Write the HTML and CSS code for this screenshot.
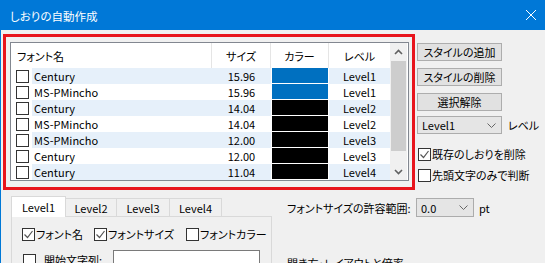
FILE: index.html
```html
<!DOCTYPE html>
<html lang="ja">
<head>
    <meta charset="utf-8">
    <title>しおりの自動作成</title>
    <link rel="stylesheet" href="styles.css">
</head>
<body>
    <div class="window">
        <div class="titlebar">
            <span class="title">しおりの自動作成</span>
            <svg class="close" width="10" height="10" viewBox="0 0 10 10"><path d="M0 0L10 10M10 0L0 10" stroke="#fff" stroke-width="1"/></svg>
        </div>

        <div class="top">
            <div class="redbox">
                <div class="listbox">
                    <div class="table">
                        <div class="head">
                            <div class="hcell name">フォント名</div>
                            <div class="hcell">サイズ</div>
                            <div class="hcell">カラー</div>
                            <div class="hcell last">レベル</div>
                        </div>
                        <div class="row odd">
                            <div class="ck"><span class="cb"></span></div>
                            <div class="c-name">Century</div>
                            <div class="c-mid">15.96</div>
                            <div class="c-color"><div class="swatch blue"></div></div>
                            <div class="c-mid">Level1</div>
                        </div>
                        <div class="row">
                            <div class="ck"><span class="cb"></span></div>
                            <div class="c-name">MS-PMincho</div>
                            <div class="c-mid">15.96</div>
                            <div class="c-color"><div class="swatch blue"></div></div>
                            <div class="c-mid">Level1</div>
                        </div>
                        <div class="row odd">
                            <div class="ck"><span class="cb"></span></div>
                            <div class="c-name">Century</div>
                            <div class="c-mid">14.04</div>
                            <div class="c-color"><div class="swatch"></div></div>
                            <div class="c-mid">Level2</div>
                        </div>
                        <div class="row">
                            <div class="ck"><span class="cb"></span></div>
                            <div class="c-name">MS-PMincho</div>
                            <div class="c-mid">14.04</div>
                            <div class="c-color"><div class="swatch"></div></div>
                            <div class="c-mid">Level2</div>
                        </div>
                        <div class="row odd">
                            <div class="ck"><span class="cb"></span></div>
                            <div class="c-name">MS-PMincho</div>
                            <div class="c-mid">12.00</div>
                            <div class="c-color"><div class="swatch"></div></div>
                            <div class="c-mid">Level3</div>
                        </div>
                        <div class="row">
                            <div class="ck"><span class="cb"></span></div>
                            <div class="c-name">Century</div>
                            <div class="c-mid">12.00</div>
                            <div class="c-color"><div class="swatch"></div></div>
                            <div class="c-mid">Level3</div>
                        </div>
                        <div class="row odd">
                            <div class="ck"><span class="cb"></span></div>
                            <div class="c-name">Century</div>
                            <div class="c-mid">11.04</div>
                            <div class="c-color"><div class="swatch"></div></div>
                            <div class="c-mid">Level4</div>
                        </div>
                    </div>
                    <div class="scrollbar">
                        <div class="arrow"><svg width="9" height="6" viewBox="0 0 9 6"><path d="M1 5L4.5 1.5L8 5" stroke="#606060" stroke-width="1.6" fill="none"/></svg></div>
                        <div class="thumb"></div>
                        <div class="track"></div>
                        <div class="arrow"><svg width="9" height="6" viewBox="0 0 9 6"><path d="M1 1L4.5 4.5L8 1" stroke="#606060" stroke-width="1.6" fill="none"/></svg></div>
                    </div>
                </div>
            </div>

            <div class="side">
                <button class="btn first">スタイルの追加</button>
                <button class="btn">スタイルの削除</button>
                <button class="btn">選択解除</button>
                <div class="select-row">
                    <div class="select level-select">
                        <span>Level1</span>
                        <svg width="9" height="5" viewBox="0 0 9 5"><path d="M0.5 0.5L4.5 4.5L8.5 0.5" stroke="#666" fill="none"/></svg>
                    </div>
                    <span class="after">レベル</span>
                </div>
                <label class="check side-check first-check"><span class="cb"><svg width="11" height="11" viewBox="0 0 11 11"><path d="M1.5 5.5L4.5 8.5L9.5 2" stroke="#555" stroke-width="1.2" fill="none"/></svg></span>既存のしおりを削除</label>
                <label class="check side-check"><span class="cb"></span>先頭文字のみで判断</label>
            </div>
        </div>

        <div class="bottom">
            <div class="tabbox">
                <div class="tabs">
                    <div class="tab active">Level1</div>
                    <div class="tab w2">Level2</div>
                    <div class="tab w3">Level3</div>
                    <div class="tab w4">Level4</div>
                </div>
                <div class="panel">
                    <div class="panel-row">
                        <label class="check c1"><span class="cb"><svg width="11" height="11" viewBox="0 0 11 11"><path d="M1.5 5.5L4.5 8.5L9.5 2" stroke="#555" stroke-width="1.2" fill="none"/></svg></span>フォント名</label>
                        <label class="check c2"><span class="cb"><svg width="11" height="11" viewBox="0 0 11 11"><path d="M1.5 5.5L4.5 8.5L9.5 2" stroke="#555" stroke-width="1.2" fill="none"/></svg></span>フォントサイズ</label>
                        <label class="check"><span class="cb"></span>フォントカラー</label>
                    </div>
                    <div class="panel-row second">
                        <label class="check start"><span class="cb"></span>開始文字列:</label>
                        <div class="textbox"></div>
                    </div>
                </div>
            </div>

            <div class="tolerance">
                <div class="tol-row">
                    <span class="tol-label">フォントサイズの許容範囲:</span>
                    <div class="select size-select">
                        <span>0.0</span>
                        <svg width="9" height="5" viewBox="0 0 9 5"><path d="M0.5 0.5L4.5 4.5L8.5 0.5" stroke="#666" fill="none"/></svg>
                    </div>
                    <span class="pt">pt</span>
                </div>
                <div class="group-label">開き方・レイアウトと倍率</div>
            </div>
        </div>
    </div>
</body>
</html>
```

FILE: styles.css
```css
body {
    margin: 0;
    background-color: #f0f0f0;
    font-family: "Noto Sans CJK JP", sans-serif;
    font-size: 11px;
    font-feature-settings: "palt" 1;
    color: #000;
    white-space: nowrap;
}

.window {
    width: 545px;
    height: 263px;
    border-left: 1px solid #0078d7;
    box-sizing: border-box;
    overflow: hidden;
}

/* title bar */

.titlebar {
    height: 30px;
    background-color: #0078d7;
    color: #fff;
    display: flex;
    align-items: center;
    justify-content: space-between;
    padding: 0 9px 0 9px;
}
.title {
    font-size: 11.5px;
    padding-top: 1px;
}

/* list area */

.top {
    display: flex;
    height: 160px;
    padding: 4px 0 0 2px;
    box-sizing: border-box;
}

.redbox {
    width: 412px;
    height: 156px;
    box-sizing: border-box;
    border: 3px solid #e8141c;
    padding: 5px 0 0 4px;
}

.listbox {
    width: 399px;
    height: 139px;
    box-sizing: border-box;
    border: 1px solid #828790;
    background-color: #fff;
    display: flex;
}

.table {
    width: 379px;
}

.head {
    display: grid;
    grid-template-columns: 201px 59px 58px 61px;
    height: 25px;
}
.hcell {
    display: flex;
    align-items: center;
    justify-content: center;
    border-right: 1px solid #e5e5e5;
}
.hcell.name {
    justify-content: flex-start;
    padding-left: 6px;
}
.hcell.last {
    border-right: none;
}

.row {
    display: grid;
    grid-template-columns: 21px 180px 59px 58px 61px;
    height: 16px;
    line-height: 16px;
}
.row.odd .c-name,
.row.odd .c-mid {
    background-color: #e6f0fa;
}
.ck {
    display: flex;
    align-items: center;
    padding-left: 5px;
}
.c-name {
    padding-left: 2px;
}
.c-mid {
    text-align: center;
}
.c-color {
    padding: 0 1px 1px 1px;
}
.swatch {
    height: 15px;
    background-color: #000;
}
.swatch.blue {
    background-color: #0070c0;
}

.scrollbar {
    width: 17px;
    background-color: #f0f0f0;
    display: flex;
    flex-direction: column;
}
.arrow {
    height: 17px;
    display: flex;
    align-items: center;
    justify-content: center;
}
.thumb {
    height: 90px;
    margin: 1px 1px 0 1px;
    background-color: #cdcdcd;
}
.track {
    flex: 1;
}

/* checkboxes */

.cb {
    width: 13px;
    height: 13px;
    box-sizing: border-box;
    border: 1px solid #333;
    background-color: #fff;
    display: inline-flex;
    align-items: center;
    justify-content: center;
    flex-shrink: 0;
}

.check {
    display: flex;
    align-items: center;
    gap: 1px;
    height: 16px;
}

/* right column */

.side {
    margin-left: 2px;
    display: flex;
    flex-direction: column;
}

.btn {
    width: 85px;
    height: 18px;
    padding: 0;
    margin-top: 7px;
    font-family: inherit;
    font-size: 11px;
    font-feature-settings: "palt" 1;
    color: #000;
    background-color: #e1e1e1;
    border: 1px solid #adadad;
    line-height: 16px;
}
.btn.first {
    margin-top: 9px;
}

.select-row {
    display: flex;
    align-items: center;
    margin-top: 5px;
}
.select {
    height: 18px;
    box-sizing: border-box;
    border: 1px solid #acacac;
    background-color: #e5e5e5;
    display: flex;
    align-items: center;
    justify-content: space-between;
    padding: 0 5px 0 4px;
}
.level-select {
    width: 85px;
}
.after {
    margin-left: 6px;
}

.side-check {
    margin-left: 1px;
}
.first-check {
    margin-top: 12px;
}
.side-check + .side-check {
    margin-top: 5px;
}

/* bottom part */

.bottom {
    display: flex;
    padding-top: 6px;
}

.tabbox {
    margin-left: 10px;
    width: 261px;
    flex-shrink: 0;
}
.tabs {
    display: flex;
    align-items: flex-end;
    height: 20px;
}
.tab {
    height: 18px;
    box-sizing: border-box;
    border: 1px solid #d9d9d9;
    border-bottom: none;
    border-left: none;
    display: flex;
    align-items: center;
    justify-content: center;
    background-color: #f0f0f0;
}
.tab.active {
    width: 55px;
    height: 21px;
    margin-bottom: -1px;
    border-left: 1px solid #d9d9d9;
    background-color: #fff;
    position: relative;
    z-index: 1;
}
.tab.w2 {
    width: 51px;
}
.tab.w3 {
    width: 53px;
}
.tab.w4 {
    width: 52px;
}

.panel {
    height: 60px;
    border: 1px solid #d9d9d9;
    padding: 9px 0 0 10px;
}
.panel-row {
    display: flex;
}
.check.c1 {
    width: 72px;
}
.check.c2 {
    width: 92px;
}
.panel-row.second {
    margin-top: 10px;
    gap: 11px;
}
.check.start {
    margin-left: 1px;
    gap: 8px;
}
.textbox {
    width: 147px;
    height: 18px;
    box-sizing: border-box;
    border: 1px solid #7a7a7a;
    background-color: #fff;
    margin-top: -2px;
}

.tolerance {
    margin-left: 15px;
    padding-top: 2px;
}
.tol-row {
    display: flex;
    align-items: center;
}
.tol-label {
    width: 129px;
}
.size-select {
    width: 58px;
    height: 19px;
}
.pt {
    margin-left: 5px;
}
.group-label {
    margin-top: 38px;
}
```
